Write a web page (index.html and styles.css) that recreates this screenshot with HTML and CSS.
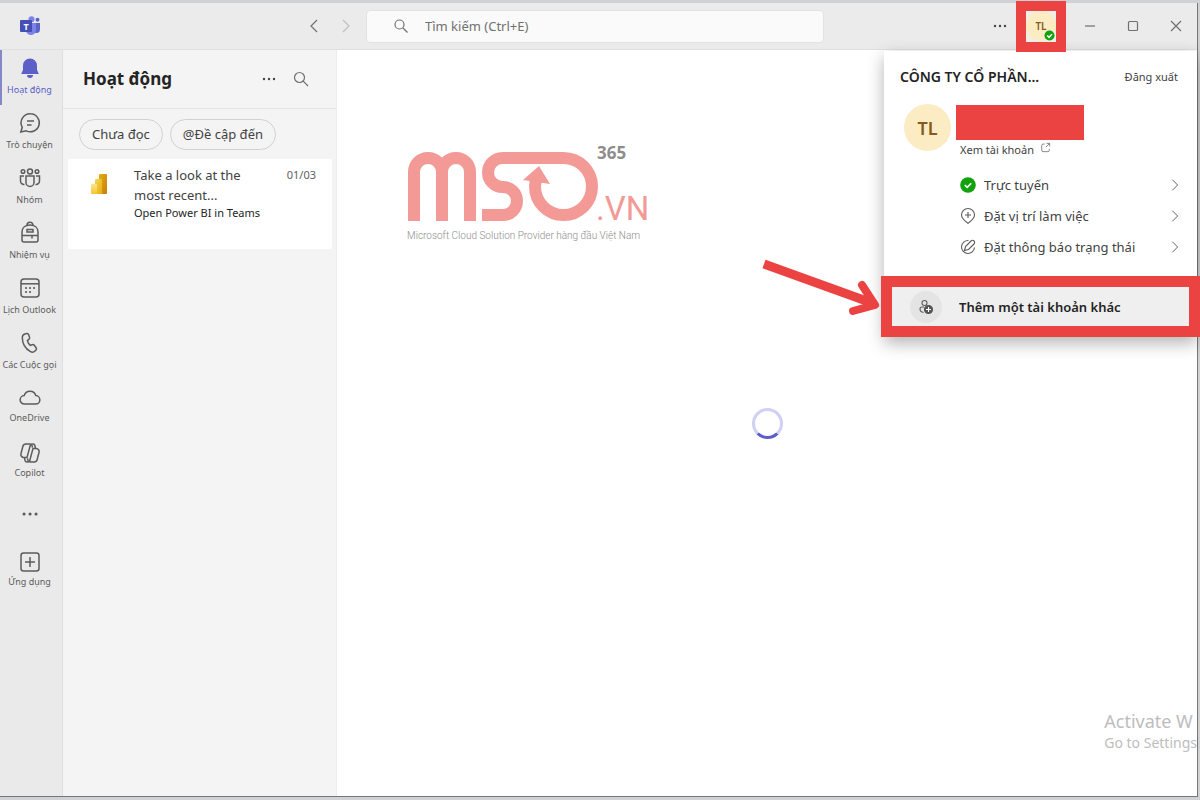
FILE: index.html
```html
<!DOCTYPE html>
<html lang="vi">
<head>
<meta charset="utf-8">
<meta name="viewport" content="width=device-width, initial-scale=1">
<title>Hoạt động | Microsoft Teams</title>
<link rel="stylesheet" href="styles.css">
</head>
<body>
<div class="window">
  <header class="titlebar">
    <div class="titlebar-start">
      <svg class="teams-logo" viewBox="0 0 22 20" aria-label="Teams" role="img">
        <circle cx="18.500" cy="3.800" r="2" fill="#5b62c8"/>
        <circle cx="12.500" cy="3.200" r="3" fill="#7b83eb"/>
        <path d="M15 7h6v6.500a3.500 3.500 0 0 1-6 2.500z" fill="#5b62c8"/>
        <path d="M7 7h10v6.500a5 5 0 0 1-10 1z" fill="#7b83eb"/>
        <rect x="1" y="4" width="12" height="12" rx="1" fill="#4450b4"/>
        <text x="7" y="13.500" text-anchor="middle" class="logo-letter">T</text>
      </svg>
      <nav class="history" aria-label="Lịch sử">
        <button class="icon-btn" type="button" aria-label="Quay lại"><svg class="ico" viewBox="0 0 16 16"><path d="M11 2 5 8l6 6"/></svg></button>
        <button class="icon-btn faded" type="button" aria-label="Tiến"><svg class="ico" viewBox="0 0 16 16"><path d="m5 2 6 6-6 6"/></svg></button>
      </nav>
    </div>
    <label class="search">
      <svg class="ico" viewBox="0 0 16 16"><circle cx="6.500" cy="6.500" r="4.500"/><path d="m10 10 4.500 4.500"/></svg>
      <input type="search" placeholder="Tìm kiếm (Ctrl+E)" aria-label="Tìm kiếm">
    </label>
    <div class="titlebar-end">
      <button class="icon-btn" type="button" aria-label="Thêm"><svg class="ico solid" viewBox="0 0 16 16"><circle cx="3" cy="8" r="1.200"/><circle cx="8" cy="8" r="1.200"/><circle cx="13" cy="8" r="1.200"/></svg></button>
      <button class="profile" type="button" aria-label="Hồ sơ">
        <span class="avatar small">TL</span>
        <svg class="presence" viewBox="0 0 12 12"><circle cx="6" cy="6" r="5.500" fill="#13a10e"/><path d="m3.500 6 2 2 3.200-3.500" class="tick"/></svg>
        <span class="callout thin"></span>
      </button>
      <button class="win-btn" type="button" aria-label="Thu nhỏ"><svg class="ico" viewBox="0 0 16 16"><path d="M3 8h10"/></svg></button>
      <button class="win-btn" type="button" aria-label="Phóng to"><svg class="ico" viewBox="0 0 16 16"><rect x="3.500" y="3.500" width="9" height="9" rx="1"/></svg></button>
      <button class="win-btn" type="button" aria-label="Đóng"><svg class="ico" viewBox="0 0 16 16"><path d="m3 3 10 10M13 3 3 13"/></svg></button>
    </div>
  </header>

  <div class="body">
    <nav class="rail" aria-label="Ứng dụng">
      <button class="rail-item active" type="button"><svg viewBox="0 0 22 22"><path d="M11 1.500a7 7 0 0 0-7 7v4.300L2.200 17h17.600L18 12.800V8.500a7 7 0 0 0-7-7zM8 18h6a3 3 0 0 1-6 0z" fill="currentColor" stroke="none"/></svg>Hoạt động</button>
      <button class="rail-item" type="button"><svg viewBox="0 0 22 22"><path d="M11.500 1.800a9 9 0 1 1-4.300 17L1.800 20l1.500-4.700A9 9 0 0 1 11.500 1.800zM8 9h7M8 13h4.500"/></svg>Trò chuyện</button>
      <button class="rail-item" type="button"><svg viewBox="0 0 22 22"><circle cx="11" cy="4.500" r="2.500"/><circle cx="4" cy="4.500" r="1.800"/><circle cx="18" cy="4.500" r="1.800"/><path d="M7 9h8v6.500a4 4 0 0 1-8 0zM5 9H1.500v5a3.500 3.500 0 0 0 4 3.500M17 9h3.500v5a3.500 3.500 0 0 1-4 3.500"/></svg>Nhóm</button>
      <button class="rail-item" type="button"><svg viewBox="0 0 22 22"><path d="M3 18V10c0-4 3-7 8-7s8 3 8 7v8a2 2 0 0 1-2 2H5a2 2 0 0 1-2-2zM8 3.200a3 3 0 0 1 6 0M3 13.500h16M13 13.500v3M8 7.500h6v2.500H8z"/></svg>Nhiệm vụ</button>
      <button class="rail-item" type="button"><svg viewBox="0 0 22 22"><rect x="2" y="2" width="18" height="18" rx="3"/><path d="M2 6.800h18"/><path d="M7 11h.1M11 11h.1M15 11h.1M7 15h.1M11 15h.1" class="dots"/></svg>Lịch Outlook</button>
      <button class="rail-item" type="button"><svg viewBox="0 0 22 22"><path d="m6 1.900 1.600-.4c1-.2 1.700.3 2 1.100l.9 2.600c.3.900 0 1.700-.7 2.200L8.400 8.600c.4 1.900 1.400 3.500 3 4.800l1.800-.7c.9-.3 1.700 0 2.300.8l1.600 2.200c.6.800.5 1.700-.1 2.300l-1 1c-1.200 1.200-3 1.400-4.500.6C6.300 16.700 3.300 11.500 3.300 5.500 3.300 3.700 4.300 2.300 6 1.900z"/></svg>Các Cuộc gọi</button>
      <button class="rail-item tight" type="button"><svg viewBox="0 0 22 22"><path d="M5.500 17a4.200 4.200 0 0 1-.3-8.400 6 6 0 0 1 11.600 0A4.200 4.200 0 0 1 16.500 17z"/></svg>OneDrive</button>
      <button class="rail-item tight" type="button"><svg viewBox="0 0 22 22"><path d="M13.500 5.500 13 3.600A2.500 2.500 0 0 0 10.600 2H6.800a3 3 0 0 0-2.900 2.200L2 11.500A3 3 0 0 0 4.900 15.500H8L11 4.500a2.500 2.500 0 0 1 2.400-2.500h.5a2 2 0 0 1 2 1.500l.6 3M8.500 16.500l.5 2A2.500 2.500 0 0 0 11.400 20h3.800a3 3 0 0 0 2.900-2.200l1.900-7.300a3 3 0 0 0-2.900-4H14l-3 11a2.500 2.500 0 0 1-2.400 2.500H8a2 2 0 0 1-2-1.500l-.6-3"/></svg>Copilot</button>
      <button class="rail-item more" type="button" aria-label="Thêm ứng dụng"><svg viewBox="0 0 22 22"><path d="M5 11h.1M11 11h.1M17 11h.1" class="dots large"/></svg></button>
      <button class="rail-item tight" type="button"><svg viewBox="0 0 22 22"><rect x="2" y="2" width="18" height="18" rx="2.500"/><path d="M11 6v10M6 11h10"/></svg>Ứng dụng</button>
    </nav>

    <section class="feed">
      <div class="feed-head">
        <h1>Hoạt động</h1>
        <button class="icon-btn" type="button" aria-label="Tùy chọn"><svg class="ico solid" viewBox="0 0 16 16"><circle cx="3" cy="8" r="1.200"/><circle cx="8" cy="8" r="1.200"/><circle cx="13" cy="8" r="1.200"/></svg></button>
        <button class="icon-btn" type="button" aria-label="Lọc"><svg class="ico" viewBox="0 0 16 16"><circle cx="6.500" cy="6.500" r="5"/><path d="m10.200 10.200 4.800 4.800"/></svg></button>
      </div>
      <div class="chips">
        <button class="chip" type="button">Chưa đọc</button>
        <button class="chip" type="button">@Đề cập đến</button>
      </div>
      <article class="card">
        <svg class="powerbi" viewBox="0 0 18 22" aria-hidden="true">
          <defs>
            <linearGradient id="bar-back" x1="0" y1="0" x2="1" y2="1"><stop offset="0" stop-color="#e6ad10"/><stop offset="1" stop-color="#c87e0e"/></linearGradient>
            <linearGradient id="bar-mid" x1="0" y1="0" x2="1" y2="1"><stop offset="0" stop-color="#f6d751"/><stop offset="1" stop-color="#e6ad10"/></linearGradient>
            <linearGradient id="bar-front" x1="0" y1="0" x2="0" y2="1"><stop offset="0" stop-color="#f9e589"/><stop offset="1" stop-color="#f6c533"/></linearGradient>
          </defs>
          <rect x="9" y="1" width="8" height="20" rx="1" fill="url(#bar-back)"/>
          <path d="M6 6h5a1 1 0 0 1 1 1v14H5V7a1 1 0 0 1 1-1z" fill="url(#bar-mid)"/>
          <path d="M2 11h4a1 1 0 0 1 1 1v9H2a1 1 0 0 1-1-1v-8a1 1 0 0 1 1-1z" fill="url(#bar-front)"/>
        </svg>
        <div class="card-text">
          <h2>Take a look at the most recent...</h2>
          <p>Open Power BI in Teams</p>
        </div>
        <time>01/03</time>
      </article>
    </section>

    <main class="stage">
      <svg class="brand" viewBox="0 0 244 102" role="img" aria-label="MSO 365 .VN">
        <g fill="none" stroke="#f39a97" stroke-width="12">
          <path d="M7 77V28a14 14 0 0 1 28 0v49M35 77V28a14 14 0 0 1 28 0v49"/>
          <path d="M75 71h21a14 14 0 0 0 0-28h-.500a14.500 14.500 0 0 1 0-29h61a28.500 28.500 0 1 1-28.500 28.500q0-4 2-10"/>
        </g>
        <path d="m132 22 11 18-27-4z" fill="#f39a97"/>
        <text x="190" y="15" class="brand-num">365</text>
        <text x="189" y="76" class="brand-tld">.VN</text>
        <text x="0" y="95" class="brand-tag">Microsoft Cloud Solution Provider hàng đầu Việt Nam</text>
      </svg>
      <div class="spinner" role="status" aria-label="Đang tải"></div>
      <div class="watermark"><strong>Activate W</strong><span>Go to Settings</span></div>
    </main>

    <aside class="account">
      <svg class="pointer" viewBox="0 0 120 60" aria-hidden="true"><path d="M4 7 112 46" stroke-width="9"/><path d="M102 28 115 48 93 54" stroke-width="8" stroke-linecap="round" stroke-linejoin="round"/></svg>
      <div class="account-head">
        <h2>CÔNG TY CỔ PHẦN...</h2>
        <a href="#signout">Đăng xuất</a>
      </div>
      <div class="person">
        <span class="avatar">TL</span>
        <div class="person-info">
          <div class="redacted"></div>
          <a href="#account">Xem tài khoản <svg class="ico" viewBox="0 0 16 16"><path d="M7 3H4.500A2 2 0 0 0 2.500 5v7a2 2 0 0 0 2 2h7a2 2 0 0 0 2-2V10M9.500 2H14v4.500M14 2 8.500 7.500"/></svg></a>
        </div>
      </div>
      <div class="menu">
        <button type="button"><svg viewBox="0 0 16 16"><circle cx="8" cy="8" r="7.800" fill="#13a10e" stroke="none"/><path d="m4.800 8 2.400 2.400 4-4.200" class="tick"/></svg><span>Trực tuyến</span><svg class="chev" viewBox="0 0 16 16"><path d="m5 2 6 6-6 6"/></svg></button>
        <button type="button"><svg viewBox="0 0 16 16"><path d="M8 15.300C5.500 13.500 1.500 10.500 1.500 7a6.500 6.500 0 0 1 13 0c0 3.500-4 6.500-6.500 8.300zM8 4v6M5 7h6"/></svg><span>Đặt vị trí làm việc</span><svg class="chev" viewBox="0 0 16 16"><path d="m5 2 6 6-6 6"/></svg></button>
        <button type="button"><svg viewBox="0 0 16 16"><path d="M8.500 1.500A6.500 6.500 0 1 0 14.500 8.500M4.500 11.500l1-4 5.500-5.500a2 2 0 0 1 3 3L8.500 10.500z"/></svg><span>Đặt thông báo trạng thái</span><svg class="chev" viewBox="0 0 16 16"><path d="m5 2 6 6-6 6"/></svg></button>
      </div>
      <button class="add-account" type="button">
        <span class="add-icon"><svg viewBox="0 0 16 16"><circle cx="6.500" cy="4" r="2.500"/><path d="M6 8H4a2 2 0 0 0-2 2c0 2 1.500 3.200 3.500 3.500"/><circle cx="10.500" cy="10.500" r="4" fill="#555" stroke="#555"/><path d="M10.500 8v5M8 10.500h5" stroke="#fff"/></svg></span>
        <span>Thêm một tài khoản khác</span>
        <span class="callout"></span>
      </button>
    </aside>
  </div>
</div>
</body>
</html>
```
FILE: styles.css
```css
* { box-sizing: border-box; }
body {
  margin: 0;
  height: 100vh;
  padding: 3px 2px 3px 0;
  background: #cfd1d3;
  color: #242424;
  font-family: "Noto Sans", "Open Sans", sans-serif;
  font-size: 13px;
  overflow: hidden;
}
h1, h2, p { margin: 0; }
button {
  font: inherit;
  color: inherit;
  background: none;
  border: 0;
  padding: 0;
}
a { color: inherit; text-decoration: none; }
svg { display: block; flex: none; overflow: visible; }
.ico {
  width: 16px;
  height: 16px;
  fill: none;
  stroke: #707070;
  stroke-width: 1.2;
}
.ico.solid { fill: #444; stroke: none; }
.tick { fill: none; stroke: #fff; stroke-width: 1.6; }

.window {
  display: flex;
  flex-direction: column;
  height: 100%;
  background: #fff;
  border-right: 1px solid #777;
  border-bottom: 1px solid #777;
}

/* Title bar */
.titlebar {
  display: grid;
  grid-template-columns: 366px minmax(160px, 458px) 1fr;
  align-items: center;
  height: 47px;
  background: #ebebeb;
  border-bottom: 1px solid #e0e0e0;
}
.titlebar-start, .titlebar-end, .history { display: flex; align-items: center; }
.titlebar-start { justify-content: space-between; padding: 0 4px 0 19px; }
.teams-logo { width: 22px; height: 20px; }
.logo-letter { font: bold 9px "Open Sans", sans-serif; fill: #fff; }
.icon-btn { display: grid; place-items: center; width: 32px; height: 32px; }
.faded { opacity: .35; }
.search {
  display: flex;
  align-items: center;
  gap: 16px;
  height: 33px;
  padding: 0 26px;
  background: #fafafa;
  border: 1px solid #e2e2e2;
  border-radius: 4px;
}
.search input {
  flex: 1;
  min-width: 0;
  padding: 0;
  border: 0;
  outline: 0;
  background: none;
  font: inherit;
}
.search input::placeholder { color: #707070; opacity: 1; }
.titlebar-end { justify-content: flex-end; }
.win-btn { display: grid; place-items: center; width: 43px; height: 46px; }
.profile {
  position: relative;
  z-index: 5;
  display: grid;
  place-items: center;
  width: 30px;
  height: 31px;
  margin: 0 12px 0 10px;
  background: #f1eee6;
}
.avatar {
  display: grid;
  place-items: center;
  width: 47px;
  height: 47px;
  border-radius: 50%;
  background: #fbecc4;
  color: #835b1c;
  font-size: 18px;
  font-weight: 600;
}
.avatar.small { width: 30px; height: 30px; font-size: 10px; }
.presence { position: absolute; right: 1px; bottom: 1px; width: 11px; height: 11px; }
.callout {
  position: absolute;
  inset: -11px;
  border: 11px solid #eb4242;
  pointer-events: none;
}
.callout.thin { inset: -10px; border-width: 10px; }

/* Body */
.body { position: relative; display: flex; flex: 1; min-height: 0; }
.rail {
  display: flex;
  flex-direction: column;
  width: 63px;
  background: #eaeaea;
  border-right: 1px solid #dedede;
}
.rail-item {
  display: flex;
  flex-direction: column;
  align-items: center;
  gap: 4px;
  height: 55px;
  padding: 7px 3px 0 0;
  color: #5c5c5c;
  font-size: 9px;
  line-height: 13px;
  white-space: nowrap;
}
.rail-item svg {
  width: 22px;
  height: 22px;
  fill: none;
  stroke: currentColor;
  stroke-width: 1.5;
}
.rail-item.active { color: #5b5fc7; box-shadow: inset 2px 0 #8488c8; }
.rail-item.tight { gap: 2px; }
.rail-item.more { height: 54px; padding-top: 13px; }
.rail-item .dots { stroke-width: 2; stroke-linecap: round; }
.rail-item .dots.large { stroke-width: 3; }

.feed {
  width: 274px;
  background: #f4f4f4;
  border-right: 1px solid #ececec;
}
.feed-head {
  display: flex;
  align-items: center;
  height: 59px;
  padding: 0 19px 0 20px;
  border-bottom: 1px solid #e4e4e4;
}
.feed-head h1 { flex: 1; font-size: 17px; font-weight: 700; line-height: 24px; }
.chips { display: flex; gap: 7px; padding: 10px 16px 9px; }
.chip {
  height: 31px;
  padding: 0 12px 2px;
  border: 1px solid #d1d1d1;
  border-radius: 16px;
  color: #424242;
  white-space: nowrap;
}
.card {
  display: flex;
  align-items: flex-start;
  height: 90px;
  margin: 0 4px 0 5px;
  padding: 6px 16px 0 22px;
  background: #fff;
  border-radius: 2px;
}
.powerbi { width: 18px; height: 22px; margin: 8px 26px 0 0; }
.card-text { flex: 1; width: 0; }
.card h2 { max-width: 120px; font-size: 13px; font-weight: 400; line-height: 20px; color: #424242; }
.card p { font-size: 11px; line-height: 16px; white-space: nowrap; }
.card time { font-size: 11px; line-height: 20px; color: #616161; }

.stage { position: relative; display: grid; flex: 1; min-width: 0; overflow: hidden; }
.stage > .brand, .stage > .spinner { grid-area: 1 / 1; }
.brand { width: 244px; height: 102px; margin: 94px 0 0 70px; }
.brand-num { font: bold 17px "Noto Sans", sans-serif; fill: #8d8d8d; }
.brand-tld { font: 33px Roboto, sans-serif; fill: #f39a97; }
.brand-tag { font: 300 10px Roboto, sans-serif; fill: #8d8d8d; }
.spinner {
  place-self: center;
  width: 31px;
  height: 31px;
  border: 3px solid #cfd0f3;
  border-bottom-color: #5b5fc7;
  border-radius: 50%;
}
.watermark {
  position: absolute;
  right: 0;
  bottom: 43px;
  display: flex;
  flex-direction: column;
  color: #bdbdbd;
  font-size: 14px;
  line-height: 20px;
  white-space: nowrap;
}
.watermark strong { font-size: 18px; font-weight: 400; line-height: 24px; }

/* Account flyout */
.account {
  position: absolute;
  top: 1px;
  right: 0;
  width: 313px;
  background: #fff;
  box-shadow: 0 6px 16px rgba(0, 0, 0, .3);
}
.account-head {
  display: flex;
  align-items: center;
  justify-content: space-between;
  height: 50px;
  padding: 0 19px 0 16px;
}
.account-head h2 { font-size: 14px; font-weight: 600; }
.account-head a, .person a { font-size: 11px; color: #424242; }
.person { display: flex; align-items: flex-start; gap: 5px; padding: 3px 20px 0; }
.redacted { width: 128px; height: 35px; margin-top: 1px; background: #eb4242; }
.person a { display: flex; gap: 6px; padding-left: 4px; line-height: 20px; }
.person .ico { width: 11px; height: 11px; margin-top: 2px; }
.menu { padding: 9px 11px 14px 76px; }
.menu button {
  display: flex;
  align-items: center;
  gap: 8px;
  width: 100%;
  height: 31px;
  color: #424242;
  text-align: left;
  white-space: nowrap;
}
.menu span { flex: 1; }
.menu svg, .add-icon svg {
  width: 16px;
  height: 16px;
  fill: none;
  stroke: #5c5c5c;
  stroke-width: 1.1;
}
.menu .chev { width: 14px; height: 14px; margin-right: 4px; }
.add-account {
  position: relative;
  display: flex;
  align-items: center;
  gap: 17px;
  width: 297px;
  height: 39px;
  margin: 11px 8px;
  padding-left: 18px;
  background: #efefef;
  font-weight: 600;
  white-space: nowrap;
}
.add-icon {
  display: grid;
  place-items: center;
  width: 32px;
  height: 32px;
  border-radius: 50%;
  background: #e4e4e4;
}
.pointer {
  position: absolute;
  right: 317px;
  top: 206px;
  width: 120px;
  height: 60px;
  fill: none;
  stroke: #eb4242;
}
```
